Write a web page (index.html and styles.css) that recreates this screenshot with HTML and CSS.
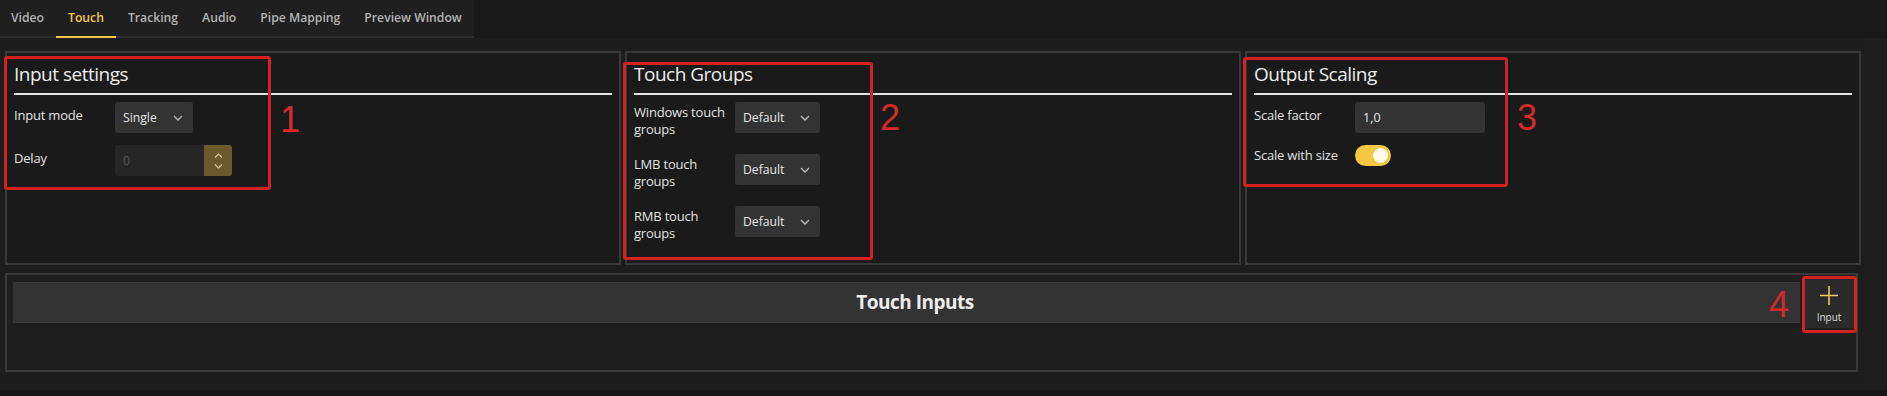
FILE: index.html
```html
<!DOCTYPE html>
<html lang="en">

<head>
    <meta charset="UTF-8">
    <title>Touch settings</title>
    <link rel="stylesheet" href="styles.css">
</head>

<body>
    <div class="topbar">
        <nav class="tabs">
            <span class="tab">Video</span>
            <span class="tab active">Touch</span>
            <span class="tab">Tracking</span>
            <span class="tab">Audio</span>
            <span class="tab">Pipe Mapping</span>
            <span class="tab">Preview Window</span>
        </nav>
    </div>

    <div class="window">
        <div class="main">
            <div class="settings">
                <section class="panel">
                    <h2 class="panel-title">Input settings</h2>
                    <div class="rows">
                        <div class="row">
                            <span class="row-label">Input mode</span>
                            <div class="select">
                                <span>Single</span>
                                <svg width="10" height="6" viewBox="0 0 10 6"><path d="M1 1l4 4 4-4" fill="none" stroke="#bdbdbd" stroke-width="1.3"/></svg>
                            </div>
                        </div>
                        <div class="row">
                            <span class="row-label">Delay</span>
                            <div class="spinner">
                                <span class="spinner-value">0</span>
                                <div class="spinner-buttons">
                                    <svg width="9" height="5" viewBox="0 0 9 5"><path d="M1 4.5L4.5 1 8 4.5" fill="none" stroke="#d6cba0" stroke-width="1.2"/></svg>
                                    <svg width="9" height="5" viewBox="0 0 9 5"><path d="M1 .5L4.5 4 8 .5" fill="none" stroke="#d6cba0" stroke-width="1.2"/></svg>
                                </div>
                            </div>
                        </div>
                    </div>
                </section>

                <section class="panel">
                    <h2 class="panel-title">Touch Groups</h2>
                    <div class="rows tall">
                        <div class="row">
                            <span class="row-label">Windows touch<br>groups</span>
                            <div class="select">
                                <span>Default</span>
                                <svg width="10" height="6" viewBox="0 0 10 6"><path d="M1 1l4 4 4-4" fill="none" stroke="#bdbdbd" stroke-width="1.3"/></svg>
                            </div>
                        </div>
                        <div class="row">
                            <span class="row-label">LMB touch<br>groups</span>
                            <div class="select">
                                <span>Default</span>
                                <svg width="10" height="6" viewBox="0 0 10 6"><path d="M1 1l4 4 4-4" fill="none" stroke="#bdbdbd" stroke-width="1.3"/></svg>
                            </div>
                        </div>
                        <div class="row">
                            <span class="row-label">RMB touch<br>groups</span>
                            <div class="select">
                                <span>Default</span>
                                <svg width="10" height="6" viewBox="0 0 10 6"><path d="M1 1l4 4 4-4" fill="none" stroke="#bdbdbd" stroke-width="1.3"/></svg>
                            </div>
                        </div>
                    </div>
                </section>

                <section class="panel">
                    <h2 class="panel-title">Output Scaling</h2>
                    <div class="rows">
                        <div class="row">
                            <span class="row-label">Scale factor</span>
                            <div class="text-field">1,0</div>
                        </div>
                        <div class="row toggle-row">
                            <span class="row-label">Scale with size</span>
                            <div class="toggle"><span class="knob"></span></div>
                        </div>
                    </div>
                </section>
            </div>

            <section class="inputs-panel">
                <div class="inputs-header">Touch Inputs</div>
                <button class="add-input">
                    <svg width="18" height="19" viewBox="0 0 18 19"><path d="M9 0v19M0 9.5h18" stroke="#f0d060" stroke-width="1.5"/></svg>
                    <span>Input</span>
                </button>
            </section>
        </div>
        <div class="scroll"><div class="scroll-track"></div></div>
    </div>

    <!-- annotations -->
    <div class="mark mark-1"></div>
    <div class="mark mark-2"></div>
    <div class="mark mark-3"></div>
    <div class="mark mark-4"></div>
    <span class="num num-1">1</span>
    <span class="num num-2">2</span>
    <span class="num num-3">3</span>
    <span class="num num-4">4</span>
</body>

</html>
```

FILE: styles.css
```css
* {
    box-sizing: border-box;
}

body {
    margin: 0;
    width: 1887px;
    height: 396px;
    overflow: hidden;
    position: relative;
    background-color: #161616;
    font-family: "Open Sans", sans-serif;
    color: #e4e4e4;
}

.topbar {
    height: 38px;
    background-color: #191919;
}

.tabs {
    display: flex;
    width: max-content;
    height: 38px;
    margin-left: -1px;
    background-color: #1f1f1f;
    box-shadow: inset 0 -2px 0 #2f2f2f;
}

.tab {
    flex-shrink: 0;
    white-space: nowrap;
    padding: 0 12px;
    line-height: 36px;
    border-bottom: 2px solid transparent;
    font-size: 12.2px;
    font-weight: 600;
    color: #b4b4b4;
}

.tab.active {
    color: #f2c94c;
    border-bottom-color: #f2c94c;
}

.window {
    display: flex;
    height: 352px;
    background-color: #1d1d1d;
}

.main {
    flex: 1;
    padding: 13px 0 0 5px;
}

.settings {
    display: grid;
    grid-template-columns: repeat(3, 1fr);
    gap: 4px;
    height: 214px;
}

.panel {
    background-color: #1a1a1a;
    border: 2px solid #393939;
    padding: 9px 7px 0;
}

.panel-title {
    margin: 0;
    font-size: 19px;
    font-weight: 400;
    letter-spacing: -0.5px;
    line-height: 24px;
    padding-bottom: 7px;
    border-bottom: 2px solid #e6e6e6;
    color: #ececec;
}

.rows {
    display: flex;
    flex-direction: column;
    gap: 12px;
    padding-top: 7px;
}

.rows.tall {
    gap: 16px;
}

.row {
    display: grid;
    grid-template-columns: 101px auto;
    align-items: start;
    justify-items: start;
}

.row-label {
    font-size: 13px;
    letter-spacing: -0.2px;
    line-height: 17px;
    padding-top: 5px;
    color: #e2e2e2;
}

.tall .row-label {
    padding-top: 2px;
}

.toggle-row .row-label {
    padding-top: 2px;
}

.select {
    display: flex;
    align-items: center;
    gap: 16px;
    height: 31px;
    padding: 0 10px 0 8px;
    background-color: #333333;
    border-radius: 3px;
    font-size: 12.2px;
    color: #e6e6e6;
}

.spinner {
    display: flex;
    width: 117px;
    height: 31px;
    border-radius: 3px;
    overflow: hidden;
}

.spinner-value {
    flex: 1;
    padding-left: 8px;
    line-height: 31px;
    font-size: 12.5px;
    background-color: #262626;
    color: #555555;
}

.spinner-buttons {
    width: 28px;
    display: flex;
    flex-direction: column;
    align-items: center;
    justify-content: center;
    gap: 6px;
    background-color: #6b5a2c;
}

.spinner-buttons svg {
    display: block;
}

.text-field {
    width: 130px;
    height: 31px;
    padding-left: 8px;
    line-height: 31px;
    font-size: 12.5px;
    background-color: #333333;
    border-radius: 3px;
    color: #e6e6e6;
}

.toggle {
    display: flex;
    justify-content: flex-end;
    align-items: center;
    width: 36px;
    height: 21px;
    padding: 3px;
    border-radius: 11px;
    background-color: #f4c843;
}

.knob {
    width: 15px;
    height: 15px;
    border-radius: 50%;
    background-color: #fffbea;
}

.inputs-panel {
    display: flex;
    align-items: flex-start;
    gap: 4px;
    height: 99px;
    margin: 8px 3px 0 0;
    padding: 7px 2px 0 6px;
    border: 2px solid #393939;
    background-color: #1e1e1e;
}

.inputs-header {
    flex: 1;
    height: 41px;
    padding-left: 17px;
    line-height: 39px;
    text-align: center;
    font-size: 19px;
    font-weight: 700;
    letter-spacing: -0.5px;
    background-color: #333333;
    border-top: 1px solid #393939;
    border-bottom: 1px solid #3b3b3b;
    color: #ececec;
}

.add-input {
    display: flex;
    flex-direction: column;
    align-items: center;
    gap: 6px;
    width: 50px;
    height: 50px;
    margin-top: -4px;
    padding: 8px 0 0;
    border: none;
    background-color: #2a2a2a;
    font-family: "Open Sans", sans-serif;
    font-size: 10px;
    line-height: 12px;
    color: #dddddd;
}

.add-input svg {
    display: block;
}

.scroll {
    width: 26px;
    padding-left: 3px;
}

.scroll-track {
    width: 16px;
    height: 100%;
    background-color: #1f1f1f;
}

.mark {
    position: absolute;
    border: 3px solid #d42222;
    border-radius: 3px;
}

.mark-1 {
    left: 4px;
    top: 56px;
    width: 267px;
    height: 134px;
}

.mark-2 {
    left: 623px;
    top: 62px;
    width: 250px;
    height: 198px;
}

.mark-3 {
    left: 1243px;
    top: 57px;
    width: 265px;
    height: 130px;
}

.mark-4 {
    left: 1802px;
    top: 276px;
    width: 55px;
    height: 57px;
}

.num {
    position: absolute;
    font-family: "Liberation Sans", sans-serif;
    font-size: 36px;
    line-height: 36px;
    color: #d42a2a;
}

.num-1 {
    left: 280px;
    top: 102px;
}

.num-2 {
    left: 880px;
    top: 100px;
}

.num-3 {
    left: 1517px;
    top: 100px;
}

.num-4 {
    left: 1769px;
    top: 287px;
}
```
